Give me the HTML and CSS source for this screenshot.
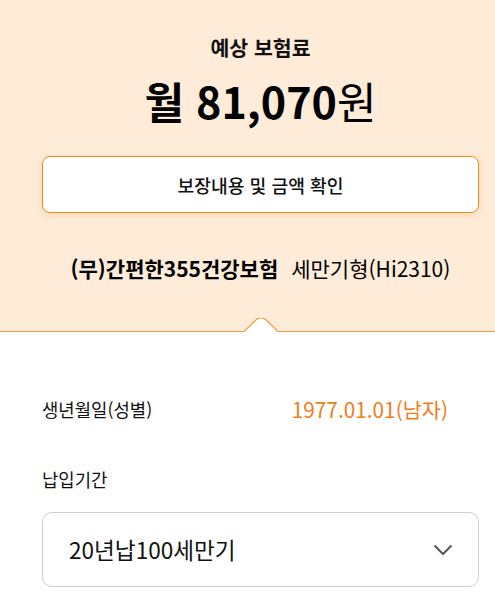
FILE: index.html
```html
<!DOCTYPE html>
<html lang="ko">
<head>
<meta charset="utf-8">
<link rel="stylesheet" href="styles.css">
</head>
<body>
<section class="top">
  <div class="title">예상 보험료</div>
  <div class="amount"><b>월 81,070</b><span class="won">원</span></div>
  <button class="btn">보장내용 및 금액 확인</button>
  <div class="product"><b>(무)간편한355건강보험</b><span class="plan">세만기형(Hi2310)</span></div>
  <svg class="notch" width="34" height="14" viewBox="0 0 34 14">
    <path d="M0 13.5 L11.5 2.2 Q17 -2.6 22.5 2.2 L34 13.5 L34 14 L0 14 Z" fill="#fff"/>
    <path d="M0 13.5 L11.5 2.2 Q17 -2.6 22.5 2.2 L34 13.5" fill="none" stroke="#f39a3c" stroke-width="1.2"/>
  </svg>
</section>
<section class="form">
  <div class="row">
    <span class="label">생년월일(성별)</span>
    <span class="value">1977.01.01(남자)</span>
  </div>
  <div class="label period">납입기간</div>
  <div class="select">
    <span class="select-text">20년납100세만기</span>
    <svg class="chev" width="20" height="12" viewBox="0 0 20 12">
      <path d="M1.5 1.5 L10 10 L18.5 1.5" fill="none" stroke="#555" stroke-width="2"/>
    </svg>
  </div>
</section>
</body>
</html>
```

FILE: styles.css
```css
* { box-sizing: border-box; }
html, body { margin: 0; padding: 0; background: #fff; }
body {
  font-family: "Noto Sans CJK KR", "Noto Sans", sans-serif;
  color: #111;
  width: 495px;
}
.top {
  position: relative;
  background: #feebd8;
  border-bottom: 1px solid #f39a3c;
  padding: 32px 16px 48px 42px;
  display: flex;
  flex-direction: column;
  align-items: stretch;
  text-align: center;
}
.title {
  font-size: 20.5px;
  font-weight: 700;
  line-height: 30px;
}
.amount {
  margin-top: 13px;
  font-size: 43px;
  line-height: 50px;
  color: #000;
}
.amount b { font-weight: 700; }
.won { font-weight: 400; }
.btn {
  margin-top: 31px;
  height: 57px;
  background: #fff;
  border: 1px solid #f08a1c;
  border-radius: 8px;
  box-shadow: 0 2px 7px rgba(240, 140, 40, 0.22);
  font-family: inherit;
  font-size: 18.2px;
  font-weight: 500;
  color: #111;
  padding: 0;
}
.product {
  margin-top: 40px;
  font-size: 21px;
  line-height: 30px;
  color: #000;
}
.product b { font-weight: 700; }
.plan { margin-left: 13px; font-weight: 400; }
.notch {
  position: absolute;
  left: 244px;
  bottom: -1px;
  display: block;
}
.form {
  padding: 62px 16px 0 42px;
  display: flex;
  flex-direction: column;
}
.row {
  display: flex;
  justify-content: space-between;
  align-items: center;
  height: 30px;
  padding-right: 31px;
}
.label {
  font-size: 17.8px;
  line-height: 24px;
  color: #111;
}
.value {
  font-size: 20.8px;
  line-height: 30px;
  color: #ef7d22;
}
.period { margin-top: 43px; }
.select {
  margin-top: 21px;
  height: 75px;
  border: 1px solid #cfcfcf;
  border-radius: 10px;
  display: flex;
  align-items: center;
  justify-content: space-between;
  padding: 0 25px 0 26px;
}
.select-text {
  font-size: 22.6px;
  line-height: 30px;
  color: #111;
}
.chev { display: block; }
```
